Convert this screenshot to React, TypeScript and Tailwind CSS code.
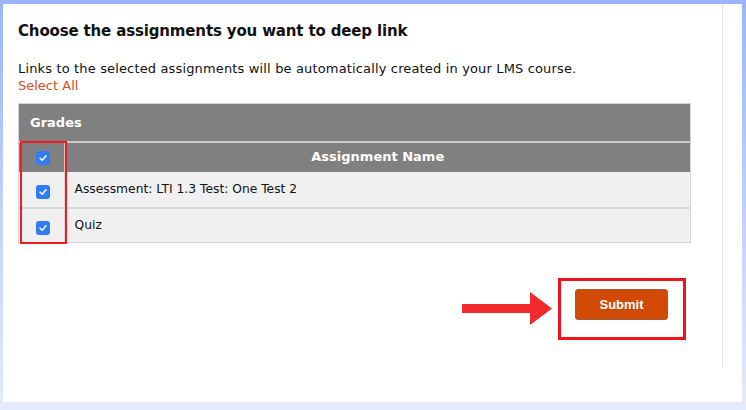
import { ReactNode } from 'react';

const rows = ['Assessment: LTI 1.3 Test: One Test 2', 'Quiz'];

const Check = () => (
  <span className="inline-flex h-[14px] w-[14px] items-center justify-center rounded-[3px] bg-[#2f7cf6] align-middle">
    <svg viewBox="0 0 12 12" className="h-[10px] w-[10px]">
      <path d="M2.5 6.3 L5 8.7 L9.6 3.4" fill="none" stroke="#fff" strokeWidth="1.9" strokeLinecap="round" strokeLinejoin="round" />
    </svg>
  </span>
);

const Cell = ({ children, className }: { children: ReactNode; className?: string }) => (
  <td className={className}>{children}</td>
);

export default function App() {
  return (
    <div className="h-[410px] w-[746px] bg-gradient-to-b from-[#9cb5f8] to-[#e4ebfd] pl-[3px] pr-[4px] pt-[4px] pb-[8px] font-['DejaVu_Sans',sans-serif] text-[#111]">
      <div className="relative h-full w-full bg-white">
        <div className="h-[364px] w-[720px] border-r border-[#e6e6e6] pl-[15px] pt-[17px]">
          <h1 className="text-[15px] font-bold leading-[20px] tracking-[-0.15px]">
            Choose the assignments you want to deep link
          </h1>
          <p className="mt-[19px] text-[13px] leading-[17px] tracking-[0.15px]">
            Links to the selected assignments will be automatically created in your LMS course.
          </p>
          <a className="block text-[13px] leading-[17px] text-[#c8531f]">Select All</a>

          <div className="relative mt-[9px] w-[673px]">
            <table className="w-full border-collapse border border-[#d4d4d4] text-[12px]">
              <thead>
                <tr className="h-[38px] bg-[#808080]">
                  <th colSpan={2} className="pl-[11px] text-left text-[13px] font-bold text-white">
                    Grades
                  </th>
                </tr>
                <tr className="h-[30px] border-t-2 border-[#c9c9c9] bg-[#808080]">
                  <Cell className="w-[46px] border-r-2 border-[#c9c9c9] pl-[3px] text-center">
                    <Check />
                  </Cell>
                  <th className="text-center text-[13px] font-bold text-white">Assignment Name</th>
                </tr>
              </thead>
              <tbody>
                {rows.map((name, idx) => (
                  <tr
                    key={idx}
                    className={`bg-[#f0f0f0] ${idx === 0 ? 'h-[36px]' : 'h-[35px] border-t-2 border-[#d9d9d9]'}`}
                  >
                    <Cell className="border-r-2 border-[#d9d9d9] pl-[3px] pt-[4px] text-center">
                      <Check />
                    </Cell>
                    <Cell className="pl-[9px] text-[12.3px]">{name}</Cell>
                  </tr>
                ))}
              </tbody>
            </table>
            <div className="pointer-events-none absolute left-[2px] top-[38px] h-[103px] w-[47px] border-2 border-[#ee1c24]" />
          </div>

          <div className="mt-[46px] flex justify-end pr-[54px]">
            <button className="flex h-[31px] w-[93px] items-center justify-center rounded-[3px] border border-[#a65a38] bg-[#d04a05] font-['Liberation_Sans',sans-serif] text-[13px] font-bold text-white">
              Submit
            </button>
          </div>
        </div>

        {/* annotations */}
        <div className="pointer-events-none absolute left-[555px] top-[274px] h-[62px] w-[128px] border-[3px] border-[#f2121b]" />
        <svg className="absolute left-[459px] top-[288px]" width="94" height="34" viewBox="0 0 94 34">
          <polygon points="0,12 68,12 68,0 90,16.5 68,33 68,21 0,21" fill="#f22a2c" />
        </svg>
      </div>
    </div>
  );
}
